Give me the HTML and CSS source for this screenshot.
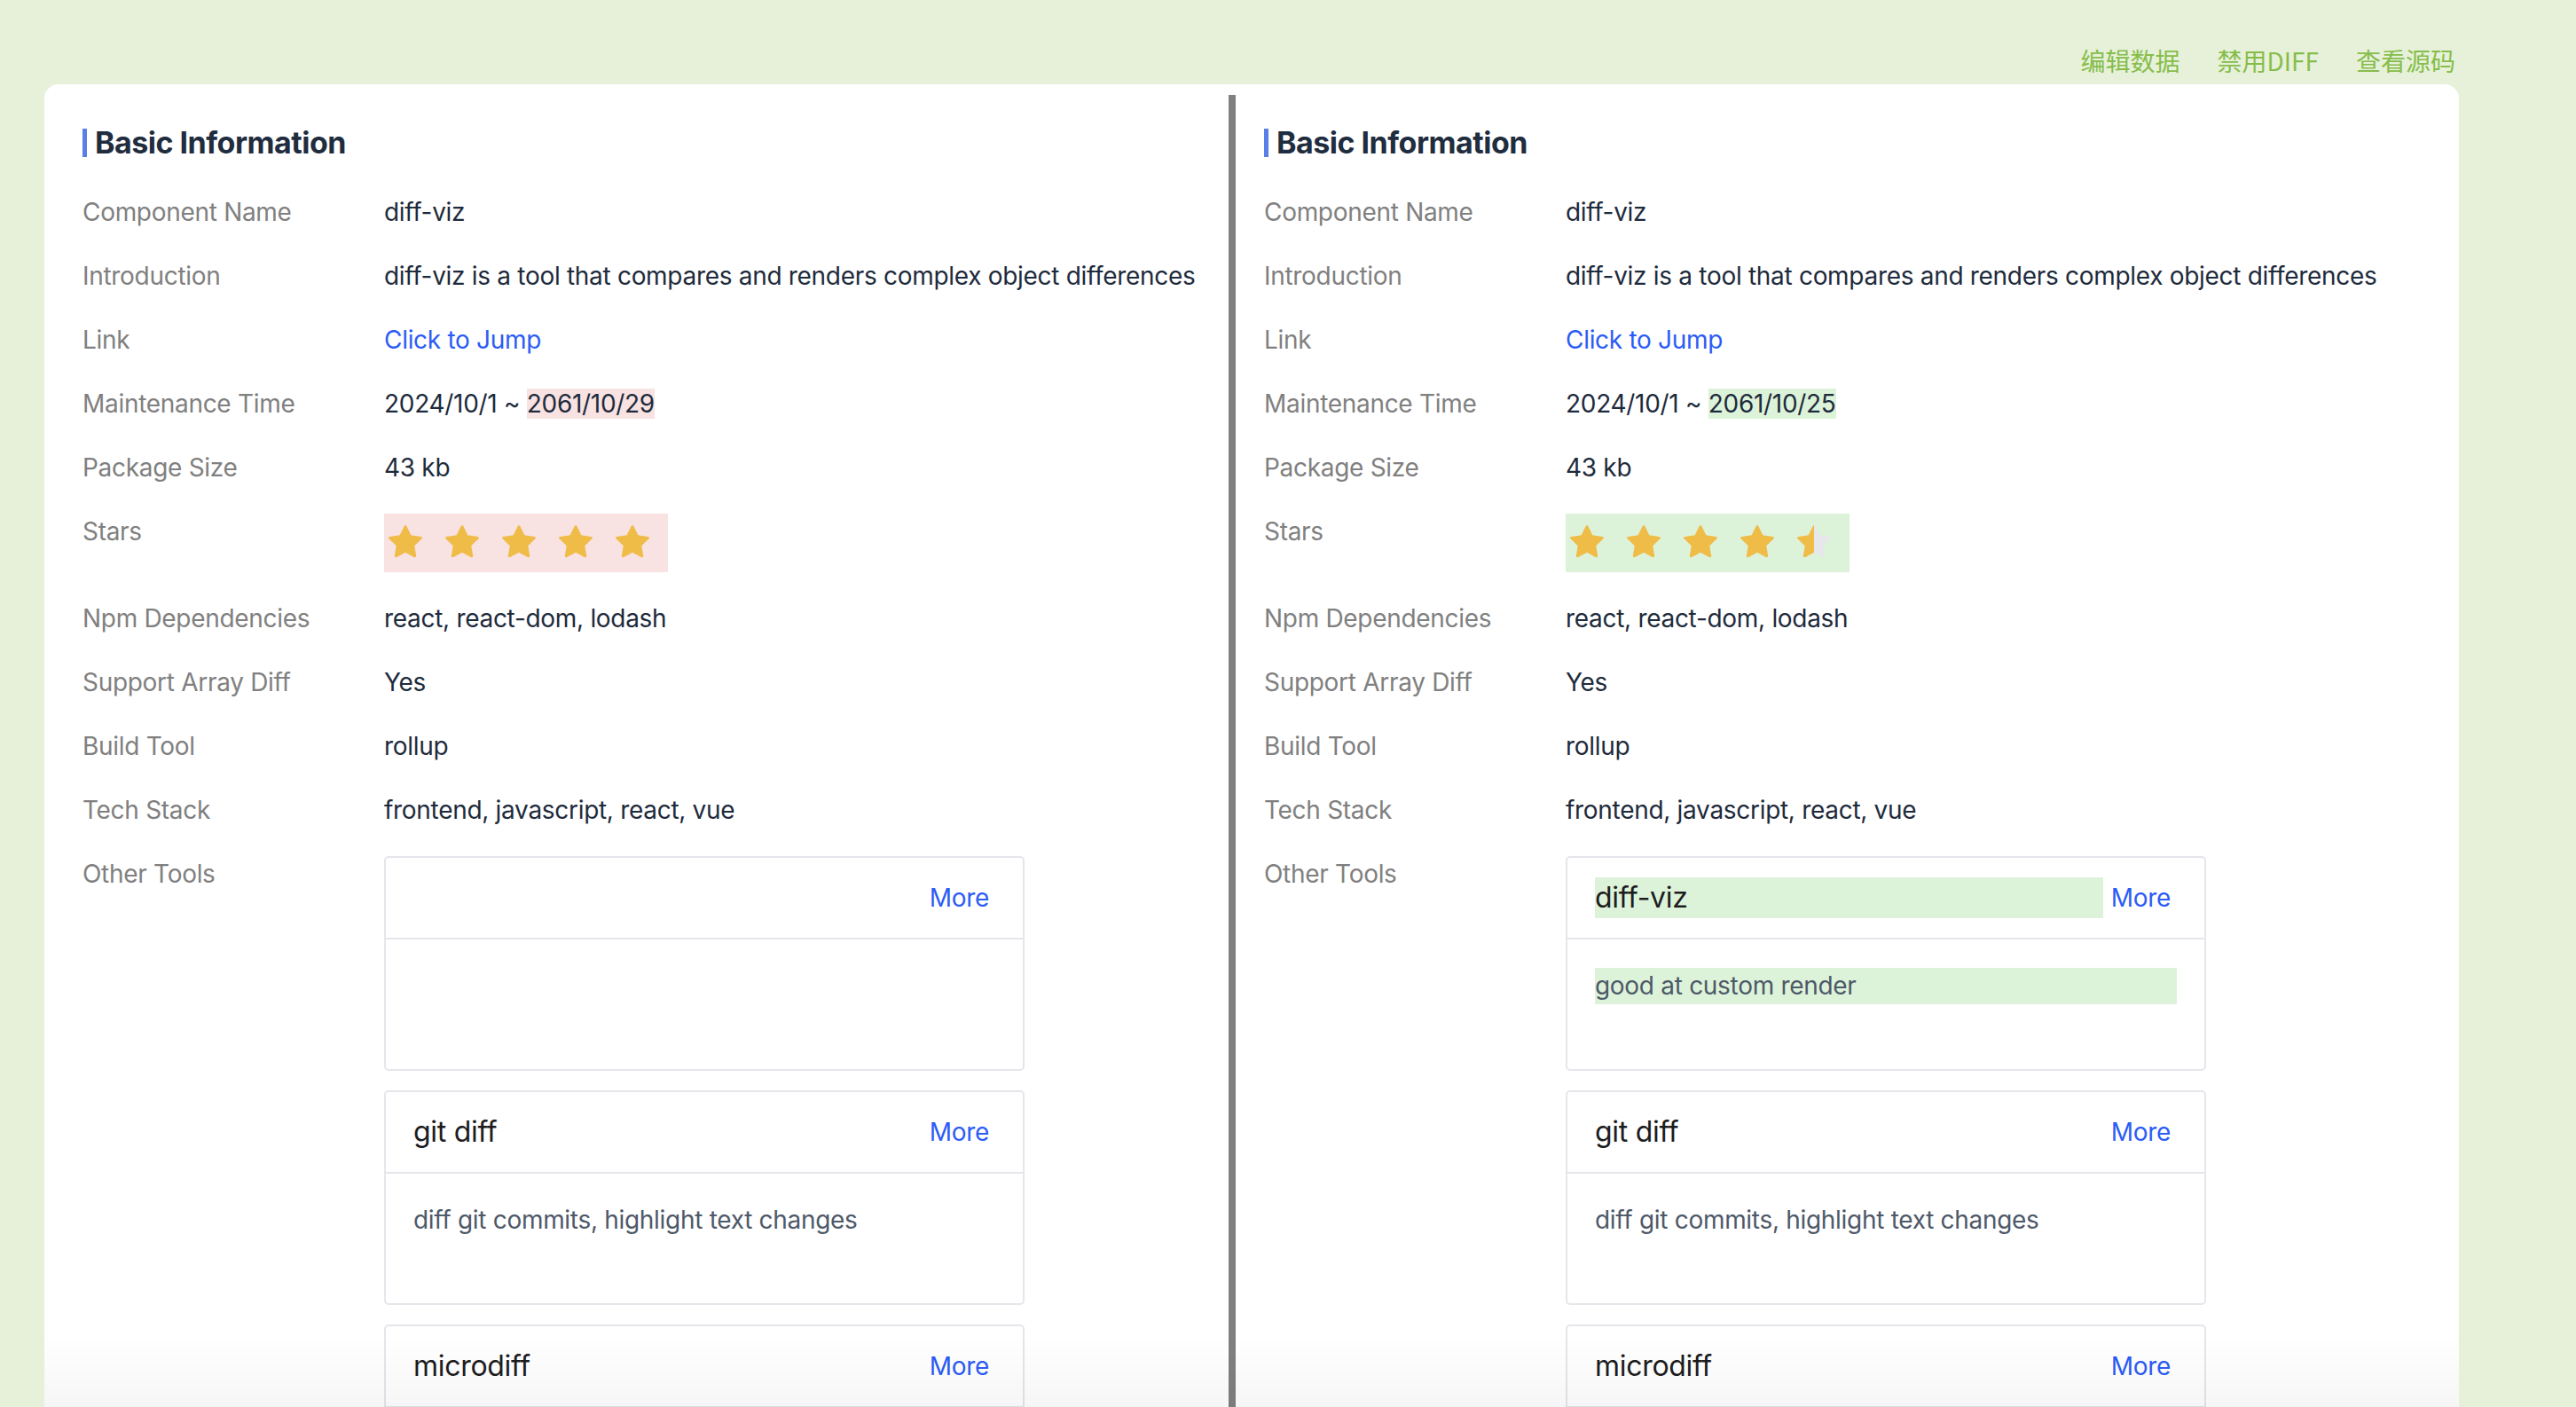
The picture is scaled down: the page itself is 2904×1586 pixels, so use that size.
FILE: index.html
```html
<!DOCTYPE html>
<html lang="en">
<head>
<meta charset="utf-8">
<title>diff-viz</title>
<link rel="stylesheet" href="styles.css">
</head>
<body>
<svg width="0" height="0" class="defs">
  <defs>
    <path id="star" d="M908.1 353.1l-253.9-36.9L540.7 86.1c-3.1-6.3-8.2-11.4-14.5-14.5-15.8-7.8-35-1.3-42.9 14.5L369.8 316.2l-253.9 36.9c-7 1-13.4 4.3-18.3 9.3a32.05 32.05 0 00.6 45.3l183.7 179.1-43.4 252.9a31.95 31.95 0 0046.4 33.7L512 754l227.1 119.4c6.2 3.3 13.4 4.4 20.3 3.2 17.4-3 29.1-19.5 26.1-36.9l-43.4-252.9 183.7-179.1c5-4.9 8.3-11.3 9.3-18.3 2.7-17.5-9.5-33.7-27-36.3z"/>
  </defs>
</svg>
<header class="topbar">
  <a class="toplink">编辑数据</a>
  <a class="toplink">禁用DIFF</a>
  <a class="toplink">查看源码</a>
</header>
<main class="card">
  <section class="panel">
    <h2 class="title"><span class="bar"></span>Basic Information</h2>
    <div class="row"><div class="label">Component Name</div><div class="value">diff-viz</div></div>
    <div class="row"><div class="label">Introduction</div><div class="value">diff-viz is a tool that compares and renders complex object differences</div></div>
    <div class="row"><div class="label">Link</div><div class="value"><a class="link">Click to Jump</a></div></div>
    <div class="row"><div class="label">Maintenance Time</div><div class="value">2024/10/1 ~ <span class="del">2061/10/29</span></div></div>
    <div class="row"><div class="label">Package Size</div><div class="value">43 kb</div></div>
    <div class="row row-stars"><div class="label">Stars</div><div class="value">
      <div class="stars del">
        <svg class="star" viewBox="64 64 896 896"><use href="#star"/></svg>
        <svg class="star" viewBox="64 64 896 896"><use href="#star"/></svg>
        <svg class="star" viewBox="64 64 896 896"><use href="#star"/></svg>
        <svg class="star" viewBox="64 64 896 896"><use href="#star"/></svg>
        <svg class="star" viewBox="64 64 896 896"><use href="#star"/></svg>
      </div>
    </div></div>
    <div class="row"><div class="label">Npm Dependencies</div><div class="value">react, react-dom, lodash</div></div>
    <div class="row"><div class="label">Support Array Diff</div><div class="value">Yes</div></div>
    <div class="row"><div class="label">Build Tool</div><div class="value">rollup</div></div>
    <div class="row"><div class="label">Tech Stack</div><div class="value">frontend, javascript, react, vue</div></div>
    <div class="row"><div class="label">Other Tools</div><div class="value">
      <div class="tool">
        <div class="tool-head"><span class="tool-name"></span><a class="more">More</a></div>
        <div class="tool-body"><span class="tool-desc"></span></div>
      </div>
      <div class="tool">
        <div class="tool-head"><span class="tool-name">git diff</span><a class="more">More</a></div>
        <div class="tool-body"><span class="tool-desc">diff git commits, highlight text changes</span></div>
      </div>
      <div class="tool">
        <div class="tool-head"><span class="tool-name">microdiff</span><a class="more">More</a></div>
        <div class="tool-body"><span class="tool-desc">tiny and fast object diff</span></div>
      </div>
    </div></div>
  </section>
  <div class="divider"></div>
  <section class="panel">
    <h2 class="title"><span class="bar"></span>Basic Information</h2>
    <div class="row"><div class="label">Component Name</div><div class="value">diff-viz</div></div>
    <div class="row"><div class="label">Introduction</div><div class="value">diff-viz is a tool that compares and renders complex object differences</div></div>
    <div class="row"><div class="label">Link</div><div class="value"><a class="link">Click to Jump</a></div></div>
    <div class="row"><div class="label">Maintenance Time</div><div class="value">2024/10/1 ~ <span class="add">2061/10/25</span></div></div>
    <div class="row"><div class="label">Package Size</div><div class="value">43 kb</div></div>
    <div class="row row-stars"><div class="label">Stars</div><div class="value">
      <div class="stars add">
        <svg class="star" viewBox="64 64 896 896"><use href="#star"/></svg>
        <svg class="star" viewBox="64 64 896 896"><use href="#star"/></svg>
        <svg class="star" viewBox="64 64 896 896"><use href="#star"/></svg>
        <svg class="star" viewBox="64 64 896 896"><use href="#star"/></svg>
        <svg class="star half" viewBox="64 64 896 896"><path fill="#e6e7eb" d="M908.1 353.1l-253.9-36.9L540.7 86.1c-3.1-6.3-8.2-11.4-14.5-14.5-15.8-7.8-35-1.3-42.9 14.5L369.8 316.2l-253.9 36.9c-7 1-13.4 4.3-18.3 9.3a32.05 32.05 0 00.6 45.3l183.7 179.1-43.4 252.9a31.950 31.95 0 0046.4 33.7L512 754l227.1 119.4c6.2 3.3 13.4 4.4 20.3 3.2 17.4-3 29.1-19.5 26.1-36.9l-43.4-252.9 183.7-179.1c5-4.9 8.3-11.3 9.3-18.3 2.7-17.5-9.5-33.7-27-36.3z"/><path fill="#f0bc48" d="M512 754L284.9 873.4a31.95 31.95 0 01-46.4-33.7l43.4-252.9L98.2 407.7a32.05 32.05 0 01-.6-45.3c4.9-5 11.3-8.3 18.3-9.3l253.9-36.9L483.3 86.1c3.9-7.9 11.2-13.2 28.7-14.2z"/></svg>
      </div>
    </div></div>
    <div class="row"><div class="label">Npm Dependencies</div><div class="value">react, react-dom, lodash</div></div>
    <div class="row"><div class="label">Support Array Diff</div><div class="value">Yes</div></div>
    <div class="row"><div class="label">Build Tool</div><div class="value">rollup</div></div>
    <div class="row"><div class="label">Tech Stack</div><div class="value">frontend, javascript, react, vue</div></div>
    <div class="row"><div class="label">Other Tools</div><div class="value">
      <div class="tool">
        <div class="tool-head"><span class="tool-name add">diff-viz</span><a class="more">More</a></div>
        <div class="tool-body"><span class="tool-desc add">good at custom render</span></div>
      </div>
      <div class="tool">
        <div class="tool-head"><span class="tool-name">git diff</span><a class="more">More</a></div>
        <div class="tool-body"><span class="tool-desc">diff git commits, highlight text changes</span></div>
      </div>
      <div class="tool">
        <div class="tool-head"><span class="tool-name">microdiff</span><a class="more">More</a></div>
        <div class="tool-body"><span class="tool-desc">tiny and fast object diff</span></div>
      </div>
    </div></div>
  </section>
</main>
<div class="fade"></div>
</body>
</html>
```

FILE: styles.css
```css
html, body {
  margin: 0;
  padding: 0;
}
body {
  background: #e7f1da;
  font-family: Inter, "Noto Sans", "Noto Sans CJK SC", sans-serif;
  letter-spacing: -0.3px;
  color: #1e2b3c;
  overflow: hidden;
  height: 1586px;
}
.defs {
  position: absolute;
  width: 0;
  height: 0;
}
.topbar {
  height: 95px;
  box-sizing: border-box;
  display: flex;
  justify-content: flex-end;
  align-items: flex-end;
  gap: 42px;
  padding: 0 136px 7px 0;
}
.toplink {
  font-family: "Noto Sans CJK SC", "Noto Sans", sans-serif;
  font-size: 28px;
  line-height: 40px;
  letter-spacing: 0;
  color: #86bd4a;
  cursor: pointer;
}
.card {
  margin: 0 132px 0 50px;
  background: #fff;
  border-radius: 16px 16px 0 0;
  padding: 12px 11px 0;
  display: grid;
  grid-template-columns: 1324px 8px 1fr;
  min-height: 1600px;
  box-sizing: border-box;
}
.panel {
  padding: 0 32px;
  min-width: 0;
}
.divider {
  background: #808080;
}
.title {
  display: flex;
  align-items: center;
  margin: 29px 0 33px;
  font-size: 34px;
  line-height: 50px;
  font-weight: 700;
  letter-spacing: -0.5px;
  color: #1f2d3f;
}
.bar {
  width: 5px;
  height: 32px;
  background: #5a7fe6;
  margin-right: 9px;
}
.row {
  display: flex;
  font-size: 28px;
  line-height: 40px;
  margin-bottom: 32px;
}
.label {
  width: 340px;
  flex: none;
  color: #808080;
}
.value {
  flex: 1;
  color: #1e2b3c;
  white-space: nowrap;
}
.link {
  color: #2c5cf6;
  cursor: pointer;
}
.del {
  background: #f8e2e2;
}
.add {
  background: #ddf3d9;
}
.stars {
  display: inline-flex;
  align-items: center;
  gap: 24px;
  height: 66px;
  padding: 0 20px 0 4px;
}
.star {
  width: 40px;
  height: 40px;
  fill: #f0bc48;
  display: block;
}
.tool {
  width: 722px;
  box-sizing: border-box;
  border: 2px solid #e5e6eb;
  border-radius: 5px;
  margin-bottom: 22px;
}
.tool-head {
  height: 90px;
  border-bottom: 2px solid #e5e6eb;
  display: flex;
  align-items: center;
  gap: 9px;
  padding: 0 38px 0 31px;
}
.tool-name {
  flex: 1;
  font-size: 32px;
  line-height: 46px;
  color: #1d1d1f;
}
.more {
  color: #2c5cf6;
  font-size: 28px;
  cursor: pointer;
}
.tool-body {
  height: 146px;
  box-sizing: border-box;
  padding: 32px 31px 0;
}
.tool-desc {
  display: block;
  font-size: 28px;
  line-height: 41px;
  color: #4e5969;
  min-height: 41px;
}
.fade {
  position: fixed;
  left: 50px;
  right: 132px;
  bottom: 0;
  height: 80px;
  background: linear-gradient(rgba(0, 0, 0, 0), rgba(0, 0, 0, 0.035));
  pointer-events: none;
}
```
